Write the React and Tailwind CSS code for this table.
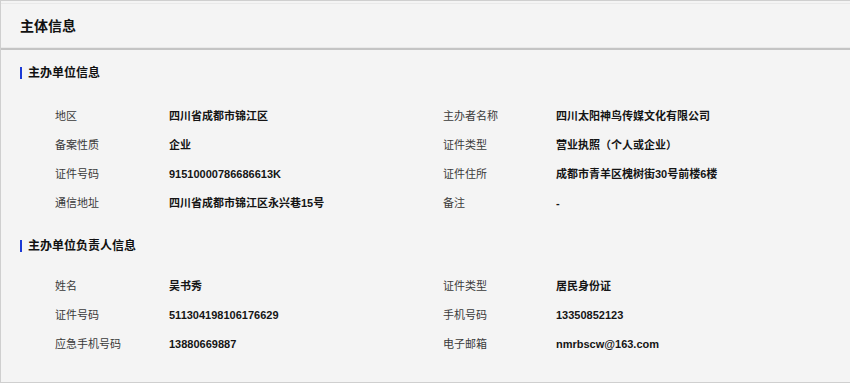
import React from "react";

const font = { fontFamily: '"Liberation Sans", "Noto Sans CJK SC", sans-serif' };

const sec1 = [
  ["地区", "四川省成都市锦江区", "主办者名称", "四川太阳神鸟传媒文化有限公司"],
  ["备案性质", "企业", "证件类型", "营业执照（个人或企业）"],
  ["证件号码", "91510000786686613K", "证件住所", "成都市青羊区槐树街30号前楼6楼"],
  ["通信地址", "四川省成都市锦江区永兴巷15号", "备注", "-"],
];

const sec2 = [
  ["姓名", "吴书秀", "证件类型", "居民身份证"],
  ["证件号码", "511304198106176629", "手机号码", "13350852123"],
  ["应急手机号码", "13880669887", "电子邮箱", "nmrbscw@163.com"],
];

function Title({ children }) {
  return (
    <div className="flex items-center h-[16px] pl-[19px]">
      <span className="w-[2px] h-[12px] bg-[#1c3ad6]" />
      <span className="ml-[6px] text-[12px] font-bold text-[#111] leading-[16px]">{children}</span>
    </div>
  );
}

function Rows({ rows }) {
  return (
    <div className="pl-[54px]">
      {rows.map((r, i) => (
        <div key={i} className="grid grid-cols-[115px_273px_114px_1fr] h-[29px] items-center text-[11px] leading-[14px]">
          <span className="text-[#3a3a3a]">{r[0]}</span>
          <span className="text-[#151515] font-bold -ml-[1px]">{r[1]}</span>
          <span className="text-[#3a3a3a]">{r[2]}</span>
          <span className="text-[#151515] font-bold -ml-[1px]">{r[3]}</span>
        </div>
      ))}
    </div>
  );
}

export default function App() {
  return (
    <div style={font} className="w-[850px] h-[383px] bg-[#f4f4f4] border-t border-l border-b border-[#cfcfcf] box-border overflow-hidden">
      <div className="h-[49px] border-b-2 border-[#c4c4c4] flex flex-col">
        <div className="h-[3px] border-b border-[#e9e9e9]" />
        <div className="flex-1 flex items-center pl-[19px] border-b border-[#e9e9e9]">
          <span className="text-[14px] font-bold text-[#111] leading-[18px]">主体信息</span>
        </div>
      </div>
      <div className="mt-[15px]">
        <Title>主办单位信息</Title>
      </div>
      <div className="mt-[20px]">
        <Rows rows={sec1} />
      </div>
      <div className="mt-[21px]">
        <Title>主办单位负责人信息</Title>
      </div>
      <div className="mt-[17px]">
        <Rows rows={sec2} />
      </div>
    </div>
  );
}
